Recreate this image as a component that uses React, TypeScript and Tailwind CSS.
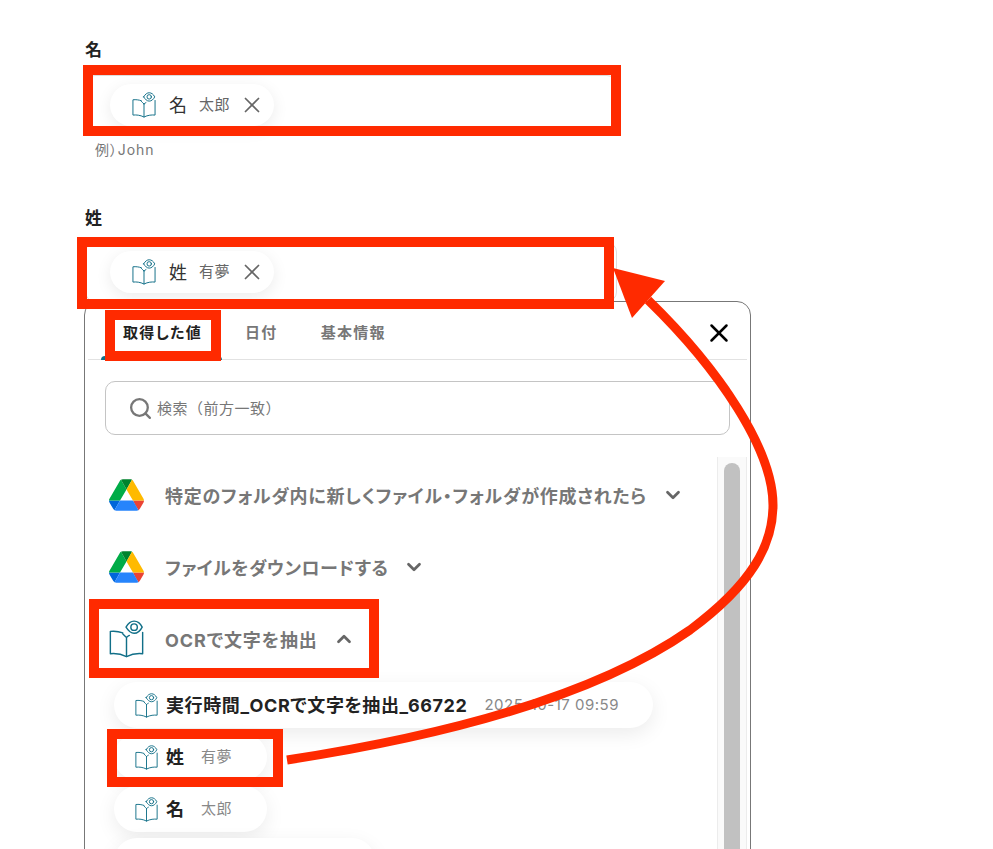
import { ChevronDown, ChevronUp, Search, X } from "lucide-react";

function BookEye({ className }: { className: string }) {
  return (
    <svg viewBox="0 0 36 40" fill="none" stroke="#116f88" strokeWidth="1.5" strokeLinejoin="round" strokeLinecap="round" className={className}>
      <path d="M14 13.5C10 12 5.500 11.500 1 12V35.500C6.500 35 12 35.500 18 38.500C24 35.500 30 35 35 35.500V13" />
      <path d="M18 18.500C16.500 17 15.500 16 14 14.500M18 18.500V38.500M18 18.500C19 17.500 20 16.800 21 16.300" />
      <path d="M17.500 7.500C20 3 23 1.200 26 1.200C29.500 1.200 32.500 3.500 34.500 7.500C32.500 11.500 29.500 14 26 14C22.500 14 20 11.500 17.500 7.500Z" />
      <circle cx="26" cy="7.500" r="3.400" />
    </svg>
  );
}

function DriveLogo() {
  return (
    <svg viewBox="0 0 87.300 78" className="h-[32px] w-[35px] shrink-0">
      <path d="m6.600 66.850 3.850 6.650c.8 1.400 1.950 2.500 3.300 3.300l13.750-23.800h-27.500c0 1.550.4 3.100 1.200 4.500z" fill="#0066da" />
      <path d="m43.650 25-13.750-23.800c-1.350.8-2.500 1.900-3.300 3.300l-25.400 44a9.060 9.060 0 0 0 -1.200 4.500h27.500z" fill="#00ac47" />
      <path d="m73.550 76.800c1.350-.8 2.500-1.900 3.300-3.300l1.600-2.750 7.650-13.250c.8-1.400 1.200-2.950 1.200-4.500h-27.502l5.852 11.500z" fill="#ea4335" />
      <path d="m43.650 25 13.750-23.800c-1.350-.8-2.900-1.200-4.500-1.200h-18.500c-1.600 0-3.150.45-4.500 1.200z" fill="#00832d" />
      <path d="m59.800 53h-32.300l-13.750 23.800c1.350.8 2.900 1.200 4.500 1.200h50.800c1.600 0 3.150-.45 4.500-1.200z" fill="#2684fc" />
      <path d="m73.400 26.500-12.700-22c-.8-1.400-1.950-2.500-3.300-3.300l-13.750 23.800 16.150 28h27.450c0-1.550-.4-3.100-1.200-4.500z" fill="#ffba00" />
    </svg>
  );
}

function FieldPill({ name, value }: { name: string; value: string }) {
  return (
    <div className="flex h-[42px] w-[164px] items-center rounded-full bg-white pl-[22px] shadow-[0_4px_16px_rgba(0,0,0,0.08)]">
      <BookEye className="h-[26px] w-[24px] shrink-0" />
      <span className="ml-[13px] text-[18px] text-[#333]">{name}</span>
      <span className="ml-[12px] text-[15px] tracking-[0.6px] text-[#666]">{value}</span>
      <X size={26} strokeWidth={1.6} className="ml-[9px] text-[#666]" />
    </div>
  );
}

function Field({ name, value }: { name: string; value: string }) {
  return (
    <div className="flex h-[60px] w-[532px] items-center rounded-[10px] border border-[#ddd] pl-[24px]">
      <FieldPill name={name} value={value} />
    </div>
  );
}

function DriveRow({ title, tracking }: { title: string; tracking: string }) {
  return (
    <div className="flex h-[72px] items-center pl-[24px]">
      <DriveLogo />
      <span className={`ml-[21px] pt-[3px] text-[18px] font-bold text-[#777] ${tracking}`}>{title}</span>
      <ChevronDown size={22} strokeWidth={3} className="ml-[15px] text-[#666]" />
    </div>
  );
}

function ValuePill({ name, value, width }: { name: string; value: string; width: string }) {
  return (
    <div className={`flex h-[46px] shrink-0 items-center rounded-full bg-white pl-[21px] shadow-[0_6px_20px_rgba(0,0,0,0.08)] ${width}`}>
      <BookEye className="h-[25px] w-[23px] shrink-0" />
      <span className="ml-[8px] pt-[1px] text-[18px] font-bold text-[#222]">{name}</span>
      <span className="ml-[17px] pt-[1px] text-[15px] tracking-[0.4px] text-[#888]">{value}</span>
    </div>
  );
}

export default function App() {
  return (
    <div className="relative h-[849px] w-[993px] overflow-hidden bg-white pl-[85px] font-['Inter','Noto_Sans_CJK_JP',sans-serif] text-[#222] [font-feature-settings:'palt']">
      <p className="pt-[38px] text-[17px] leading-[24px] font-bold">名</p>
      <div className="mt-[13px]">
        <Field name="名" value="太郎" />
      </div>
      <p className="mt-[5px] pl-[10px] text-[14px] leading-[20px] tracking-[0.9px] text-[#777]">例）John</p>
      <p className="mt-[46px] text-[17px] leading-[24px] font-bold">姓</p>
      <div className="mt-[12px]">
        <Field name="姓" value="有夢" />
      </div>

      <div className="mt-[-1px] ml-[-1px] h-[600px] w-[667px] rounded-[14px] border border-[#777] bg-white">
        <div className="relative mx-[3px] flex h-[58px] items-center border-b border-[#e2e2e2] pt-[6px] pl-[35px] text-[15px] font-bold tracking-[1.3px] text-[#777]">
          <span className="text-[#222]">取得した値</span>
          <span className="ml-[43px]">日付</span>
          <span className="ml-[43px]">基本情報</span>
          <span className="absolute bottom-[-1px] left-[13px] h-[4px] w-[121px] rounded-t-[4px] bg-[#116f88]" />
          <X size={30} strokeWidth={2} className="absolute top-[16px] right-[13px] text-black" />
        </div>

        <div className="mx-[20px] mt-[21px] flex h-[54px] w-[625px] items-center rounded-[10px] border border-[#c4c4c4] pl-[22px] text-[15px] tracking-[0.5px] text-[#777] [font-feature-settings:normal]">
          <Search size={25} strokeWidth={2.2} className="text-[#777]" />
          <span className="ml-[4px] pt-[3px]">検索（前方一致）</span>
        </div>

        <div className="mt-[22px] flex">
          <div className="w-[632px]">
            <div className="h-[2px]" />
            <DriveRow title="特定のフォルダ内に新しくファイル・フォルダが作成されたら" tracking="tracking-[0.7px]" />
            <DriveRow title="ファイルをダウンロードする" tracking="tracking-[0.5px]" />
            <div className="flex h-[72px] items-center pl-[24px]">
              <BookEye className="h-[38px] w-[35px] shrink-0" />
              <span className="ml-[21px] pt-[3px] text-[18px] font-bold tracking-[0.9px] text-[#777]">OCRで文字を抽出</span>
              <ChevronUp size={22} strokeWidth={3} className="ml-[15px] text-[#666]" />
            </div>
            <div className="mt-[7px] flex flex-col gap-[6px] pl-[29px]">
              <div className="flex h-[46px] w-[539px] items-center rounded-full bg-white pl-[21px] shadow-[0_6px_20px_rgba(0,0,0,0.08)]">
                <BookEye className="h-[25px] w-[23px] shrink-0" />
                <span className="ml-[8px] text-[18px] font-bold tracking-[0.6px] whitespace-nowrap text-[#222]">実行時間_OCRで文字を抽出_66722</span>
                <span className="ml-[17px] text-[15px] tracking-[0.5px] whitespace-nowrap text-[#888]">2025-10-17 09:59</span>
              </div>
              <ValuePill name="姓" value="有夢" width="w-[153px]" />
              <ValuePill name="名" value="太郎" width="w-[153px]" />
              <div className="h-[46px] w-[261px] shrink-0 rounded-full bg-white shadow-[0_6px_20px_rgba(0,0,0,0.08)]" />
            </div>
          </div>
          <div className="flex h-[400px] w-[30px] justify-center border-x border-[#ececec] bg-[#fafafa] pt-[6px]">
            <div className="h-[394px] w-[16px] rounded-t-full bg-[#c1c1c1]" />
          </div>
        </div>
      </div>

      {/* red annotations on top of the screenshot */}
      <div className="absolute top-[65px] left-[83px] h-[71px] w-[538px] border-[10px] border-[#ff2a00]" />
      <div className="absolute top-[237px] left-[77px] h-[72px] w-[537px] border-[10px] border-[#ff2a00]" />
      <div className="absolute top-[310px] left-[105px] h-[51px] w-[116px] border-[10px] border-[#ff2a00]" />
      <div className="absolute top-[599px] left-[89px] h-[79px] w-[290px] border-[10px] border-[#ff2a00]" />
      <div className="absolute top-[729px] left-[107px] h-[58px] w-[176px] border-[10px] border-[#ff2a00]" />
      <svg viewBox="0 0 993 849" fill="none" className="absolute top-0 left-0 h-[849px] w-[993px]">
        <path d="M287 760C430 738 590 700 690 630C752 584 773 545 773 505C773 450 720 370 648 300" stroke="#ff2a00" strokeWidth="9" />
        <path d="M613 268L665 281L632 318Z" fill="#ff2a00" />
      </svg>
    </div>
  );
}
